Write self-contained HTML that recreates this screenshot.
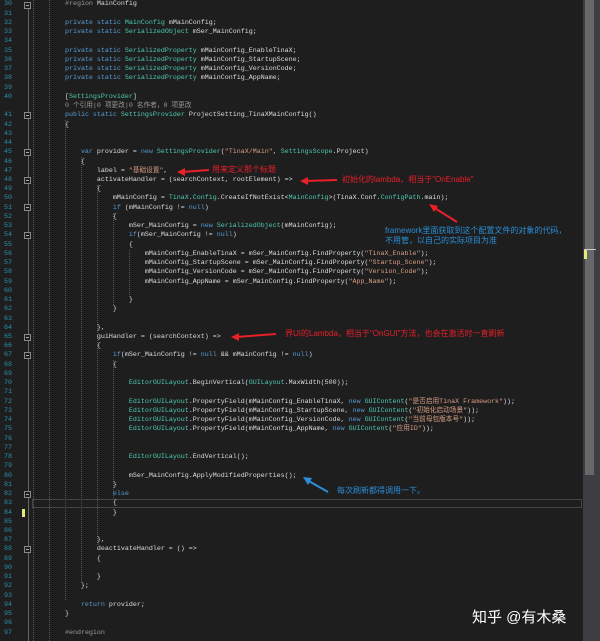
<!DOCTYPE html>
<html><head><meta charset="utf-8"><style>
body{margin:0;width:600px;height:641px;background:#1e1e1e;overflow:hidden;position:relative;font-family:"Liberation Mono","Noto Sans CJK SC",monospace;font-size:6.67px;color:#dcdcdc}
.l{position:absolute;left:0;height:9.24px;line-height:9.24px;white-space:pre;width:583px}
.n{position:absolute;left:0;width:12px;text-align:right;color:#2b91af}
.c{position:absolute;left:33px}
.k{color:#569cd6}.t{color:#4ec9b0}.s{color:#d69d85}.p{color:#9b9b9b}.g{color:#999}.m{color:#dcdcaa}
.gd{position:absolute;width:0;border-left:1px dotted #555}
.fold{position:absolute;left:24px;width:7px;height:7px;border:1px solid #888;box-sizing:border-box;background:#1e1e1e}
.fold:after{content:"";position:absolute;left:1px;top:2px;width:3px;height:1px;background:#aaa}
.ann{position:absolute;font-family:"Liberation Sans","Noto Sans CJK SC",sans-serif;font-size:8px;white-space:nowrap;line-height:10px}
.r{color:#e8202a}.b{color:#2a8fd8}
</style></head><body>
<!-- fold line -->
<div style="position:absolute;left:28px;top:2px;width:1px;height:639px;background:#666"></div>
<!-- indent guides -->
<div class="gd" style="left:33px;top:0;height:641px"></div>
<div class="gd" style="left:49px;top:0;height:641px"></div>
<div class="gd" style="left:65px;top:120px;height:480px"></div>
<div class="gd" style="left:81px;top:157px;height:425px"></div>
<div class="gd" style="left:97px;top:185px;height:360px"></div>
<div class="gd" style="left:113px;top:213px;height:92px"></div>
<div class="gd" style="left:113px;top:360px;height:140px"></div>
<div class="gd" style="left:129px;top:250px;height:45px"></div>
<!-- current line box -->
<div style="position:absolute;left:32px;top:499px;width:550px;height:9px;border:1px solid #464646;box-sizing:border-box"></div>
<div style="position:absolute;left:22px;top:509px;width:3px;height:8px;background:#e8e87a"></div>
<!-- scrollbar -->
<div style="position:absolute;left:583px;top:0;width:17px;height:641px;background:#3e3e42"></div>
<div style="position:absolute;left:585px;top:0;width:9px;height:475px;background:#686868"></div>
<div style="position:absolute;left:584px;top:250px;width:3px;height:9px;background:#e8e87a"></div>
<div style="position:absolute;left:584px;top:249px;width:12px;height:1px;background:#ccc"></div>

<!-- folds -->
<div class="fold" style="top:1.5px"></div>
<div class="fold" style="top:111.5px"></div>
<div class="fold" style="top:148.8px"></div>
<div class="fold" style="top:176.6px"></div>
<div class="fold" style="top:204.3px"></div>
<div class="fold" style="top:232px"></div>
<div class="fold" style="top:333.7px"></div>
<div class="fold" style="top:352.2px"></div>
<div class="fold" style="top:490.8px"></div>
<div class="fold" style="top:546.2px"></div>

<div class="l" style="top:0.4px"><span class="n">30</span><span class="c">        <span class="p">#region</span> MainConfig</span></div>
<div class="l" style="top:9.6px"><span class="n">31</span></div>
<div class="l" style="top:18.9px"><span class="n">32</span><span class="c">        <span class="k">private static</span> <span class="t">MainConfig</span> mMainConfig;</span></div>
<div class="l" style="top:28.1px"><span class="n">33</span><span class="c">        <span class="k">private static</span> <span class="t">SerializedObject</span> mSer_MainConfig;</span></div>
<div class="l" style="top:37.4px"><span class="n">34</span></div>
<div class="l" style="top:46.6px"><span class="n">35</span><span class="c">        <span class="k">private static</span> <span class="t">SerializedProperty</span> mMainConfig_EnableTinaX;</span></div>
<div class="l" style="top:55.8px"><span class="n">36</span><span class="c">        <span class="k">private static</span> <span class="t">SerializedProperty</span> mMainConfig_StartupScene;</span></div>
<div class="l" style="top:65.1px"><span class="n">37</span><span class="c">        <span class="k">private static</span> <span class="t">SerializedProperty</span> mMainConfig_VersionCode;</span></div>
<div class="l" style="top:74.3px"><span class="n">38</span><span class="c">        <span class="k">private static</span> <span class="t">SerializedProperty</span> mMainConfig_AppName;</span></div>
<div class="l" style="top:83.5px"><span class="n">39</span></div>
<div class="l" style="top:92.8px"><span class="n">40</span><span class="c">        [<span class="t">SettingsProvider</span>]</span></div>
<div class="l" style="top:102px"><span class="c g">        0 个引用|0 项更改|0 名作者，0 项更改</span></div>
<div class="l" style="top:111.3px"><span class="n">41</span><span class="c">        <span class="k">public static</span> <span class="t">SettingsProvider</span> ProjectSetting_TinaXMainConfig()</span></div>
<div class="l" style="top:120.5px"><span class="n">42</span><span class="c">        {</span></div>
<div class="l" style="top:129.7px"><span class="n">43</span></div>
<div class="l" style="top:139px"><span class="n">44</span></div>
<div class="l" style="top:148.2px"><span class="n">45</span><span class="c">            <span class="k">var</span> provider = <span class="k">new</span> <span class="t">SettingsProvider</span>(<span class="s">"TinaX/Main"</span>, <span class="t">SettingsScope</span>.Project)</span></div>
<div class="l" style="top:157.5px"><span class="n">46</span><span class="c">            {</span></div>
<div class="l" style="top:166.7px"><span class="n">47</span><span class="c">                label = <span class="s">"基础设置"</span>,</span></div>
<div class="l" style="top:175.9px"><span class="n">48</span><span class="c">                activateHandler = (searchContext, rootElement) =&gt;</span></div>
<div class="l" style="top:185.2px"><span class="n">49</span><span class="c">                {</span></div>
<div class="l" style="top:194.4px"><span class="n">50</span><span class="c">                    mMainConfig = <span class="t">TinaX</span>.<span class="t">Config</span>.CreateIfNotExist&lt;<span class="t">MainConfig</span>&gt;(TinaX.Conf.<span class="t">ConfigPath</span>.main);</span></div>
<div class="l" style="top:203.6px"><span class="n">51</span><span class="c">                    <span class="k">if</span> (mMainConfig != <span class="k">null</span>)</span></div>
<div class="l" style="top:212.9px"><span class="n">52</span><span class="c">                    {</span></div>
<div class="l" style="top:222.1px"><span class="n">53</span><span class="c">                        mSer_MainConfig = <span class="k">new</span> <span class="t">SerializedObject</span>(mMainConfig);</span></div>
<div class="l" style="top:231.4px"><span class="n">54</span><span class="c">                        <span class="k">if</span>(mSer_MainConfig != <span class="k">null</span>)</span></div>
<div class="l" style="top:240.6px"><span class="n">55</span><span class="c">                        {</span></div>
<div class="l" style="top:249.8px"><span class="n">56</span><span class="c">                            mMainConfig_EnableTinaX = mSer_MainConfig.FindProperty(<span class="s">"TinaX_Enable"</span>);</span></div>
<div class="l" style="top:259.1px"><span class="n">57</span><span class="c">                            mMainConfig_StartupScene = mSer_MainConfig.FindProperty(<span class="s">"Startup_Scene"</span>);</span></div>
<div class="l" style="top:268.3px"><span class="n">58</span><span class="c">                            mMainConfig_VersionCode = mSer_MainConfig.FindProperty(<span class="s">"Version_Code"</span>);</span></div>
<div class="l" style="top:277.5px"><span class="n">59</span><span class="c">                            mMainConfig_AppName = mSer_MainConfig.FindProperty(<span class="s">"App_Name"</span>);</span></div>
<div class="l" style="top:286.8px"><span class="n">60</span></div>
<div class="l" style="top:296px"><span class="n">61</span><span class="c">                        }</span></div>
<div class="l" style="top:305.3px"><span class="n">62</span><span class="c">                    }</span></div>
<div class="l" style="top:314.5px"><span class="n">63</span></div>
<div class="l" style="top:323.7px"><span class="n">64</span><span class="c">                },</span></div>
<div class="l" style="top:333px"><span class="n">65</span><span class="c">                guiHandler = (searchContext) =&gt;</span></div>
<div class="l" style="top:342.2px"><span class="n">66</span><span class="c">                {</span></div>
<div class="l" style="top:351.4px"><span class="n">67</span><span class="c">                    <span class="k">if</span>(mSer_MainConfig != <span class="k">null</span> &amp;&amp; mMainConfig != <span class="k">null</span>)</span></div>
<div class="l" style="top:360.7px"><span class="n">68</span><span class="c">                    {</span></div>
<div class="l" style="top:369.9px"><span class="n">69</span></div>
<div class="l" style="top:379.2px"><span class="n">70</span><span class="c">                        <span class="t">EditorGUILayout</span>.BeginVertical(<span class="t">GUILayout</span>.MaxWidth(500));</span></div>
<div class="l" style="top:388.4px"><span class="n">71</span></div>
<div class="l" style="top:397.6px"><span class="n">72</span><span class="c">                        <span class="t">EditorGUILayout</span>.PropertyField(mMainConfig_EnableTinaX, <span class="k">new</span> <span class="t">GUIContent</span>(<span class="s">"是否启用TinaX Framework"</span>));</span></div>
<div class="l" style="top:406.9px"><span class="n">73</span><span class="c">                        <span class="t">EditorGUILayout</span>.PropertyField(mMainConfig_StartupScene, <span class="k">new</span> <span class="t">GUIContent</span>(<span class="s">"初始化启动场景"</span>));</span></div>
<div class="l" style="top:416.1px"><span class="n">74</span><span class="c">                        <span class="t">EditorGUILayout</span>.PropertyField(mMainConfig_VersionCode, <span class="k">new</span> <span class="t">GUIContent</span>(<span class="s">"当前母包版本号"</span>));</span></div>
<div class="l" style="top:425.4px"><span class="n">75</span><span class="c">                        <span class="t">EditorGUILayout</span>.PropertyField(mMainConfig_AppName, <span class="k">new</span> <span class="t">GUIContent</span>(<span class="s">"应用ID"</span>));</span></div>
<div class="l" style="top:434.6px"><span class="n">76</span></div>
<div class="l" style="top:443.8px"><span class="n">77</span></div>
<div class="l" style="top:453.1px"><span class="n">78</span><span class="c">                        <span class="t">EditorGUILayout</span>.EndVertical();</span></div>
<div class="l" style="top:462.3px"><span class="n">79</span></div>
<div class="l" style="top:471.5px"><span class="n">80</span><span class="c">                        mSer_MainConfig.ApplyModifiedProperties();</span></div>
<div class="l" style="top:480.8px"><span class="n">81</span><span class="c">                    }</span></div>
<div class="l" style="top:490px"><span class="n">82</span><span class="c">                    <span class="k">else</span></span></div>
<div class="l" style="top:499.3px"><span class="n">83</span><span class="c">                    {</span></div>
<div class="l" style="top:508.5px"><span class="n">84</span><span class="c">                    }</span></div>
<div class="l" style="top:517.7px"><span class="n">85</span></div>
<div class="l" style="top:527px"><span class="n">86</span></div>
<div class="l" style="top:536.2px"><span class="n">87</span><span class="c">                },</span></div>
<div class="l" style="top:545.4px"><span class="n">88</span><span class="c">                deactivateHandler = () =&gt;</span></div>
<div class="l" style="top:554.7px"><span class="n">89</span><span class="c">                {</span></div>
<div class="l" style="top:563.9px"><span class="n">90</span></div>
<div class="l" style="top:573.2px"><span class="n">91</span><span class="c">                }</span></div>
<div class="l" style="top:582.4px"><span class="n">92</span><span class="c">            };</span></div>
<div class="l" style="top:591.6px"><span class="n">93</span></div>
<div class="l" style="top:600.9px"><span class="n">94</span><span class="c">            <span class="k">return</span> provider;</span></div>
<div class="l" style="top:610.1px"><span class="n">95</span><span class="c">        }</span></div>
<div class="l" style="top:619.3px"><span class="n">96</span></div>
<div class="l" style="top:628.6px"><span class="n">97</span><span class="c">        <span class="p">#endregion</span></span></div>

<!-- annotations -->
<svg style="position:absolute;left:0;top:0" width="600" height="641">
<g stroke="#e8202a" stroke-width="2" fill="#e8202a">
<line x1="209" y1="170" x2="182" y2="172"/><polygon points="177,172 185,168 185,176" stroke="none"/>
<line x1="337" y1="180" x2="305" y2="181"/><polygon points="300,181 308,177 308,185" stroke="none"/>
<line x1="457" y1="222" x2="433" y2="207"/><polygon points="429,204 438,206 434,212" stroke="none"/>
<line x1="276" y1="334" x2="236" y2="337"/><polygon points="231,337 239,333 239,341" stroke="none"/>
</g>
<g stroke="#2a8fd8" stroke-width="2" fill="#2a8fd8">
<line x1="328" y1="492" x2="307" y2="480"/><polygon points="303,477 312,478 308,485" stroke="none"/>
</g>
</svg>
<div class="ann r" style="left:212px;top:165px">用来定义那个标题</div>
<div class="ann r" style="left:342px;top:175px">初始化的lambda，相当于"OnEnable"</div>
<div class="ann b" style="left:385px;top:226px">framework里面获取到这个配置文件的对象的代码，</div>
<div class="ann b" style="left:385px;top:236px">不用管，以自己的实际项目为准</div>
<div class="ann r" style="left:285px;top:329px">界UI的Lambda，相当于"OnGUI"方法，也会在激活时一直刷新</div>
<div class="ann b" style="left:337px;top:486px">每次刷新都得调用一下。</div>
<div class="ann" style="left:472px;top:609px;font-size:15px;line-height:17px;color:#fff">知乎 @有木桑</div>
</body></html>
